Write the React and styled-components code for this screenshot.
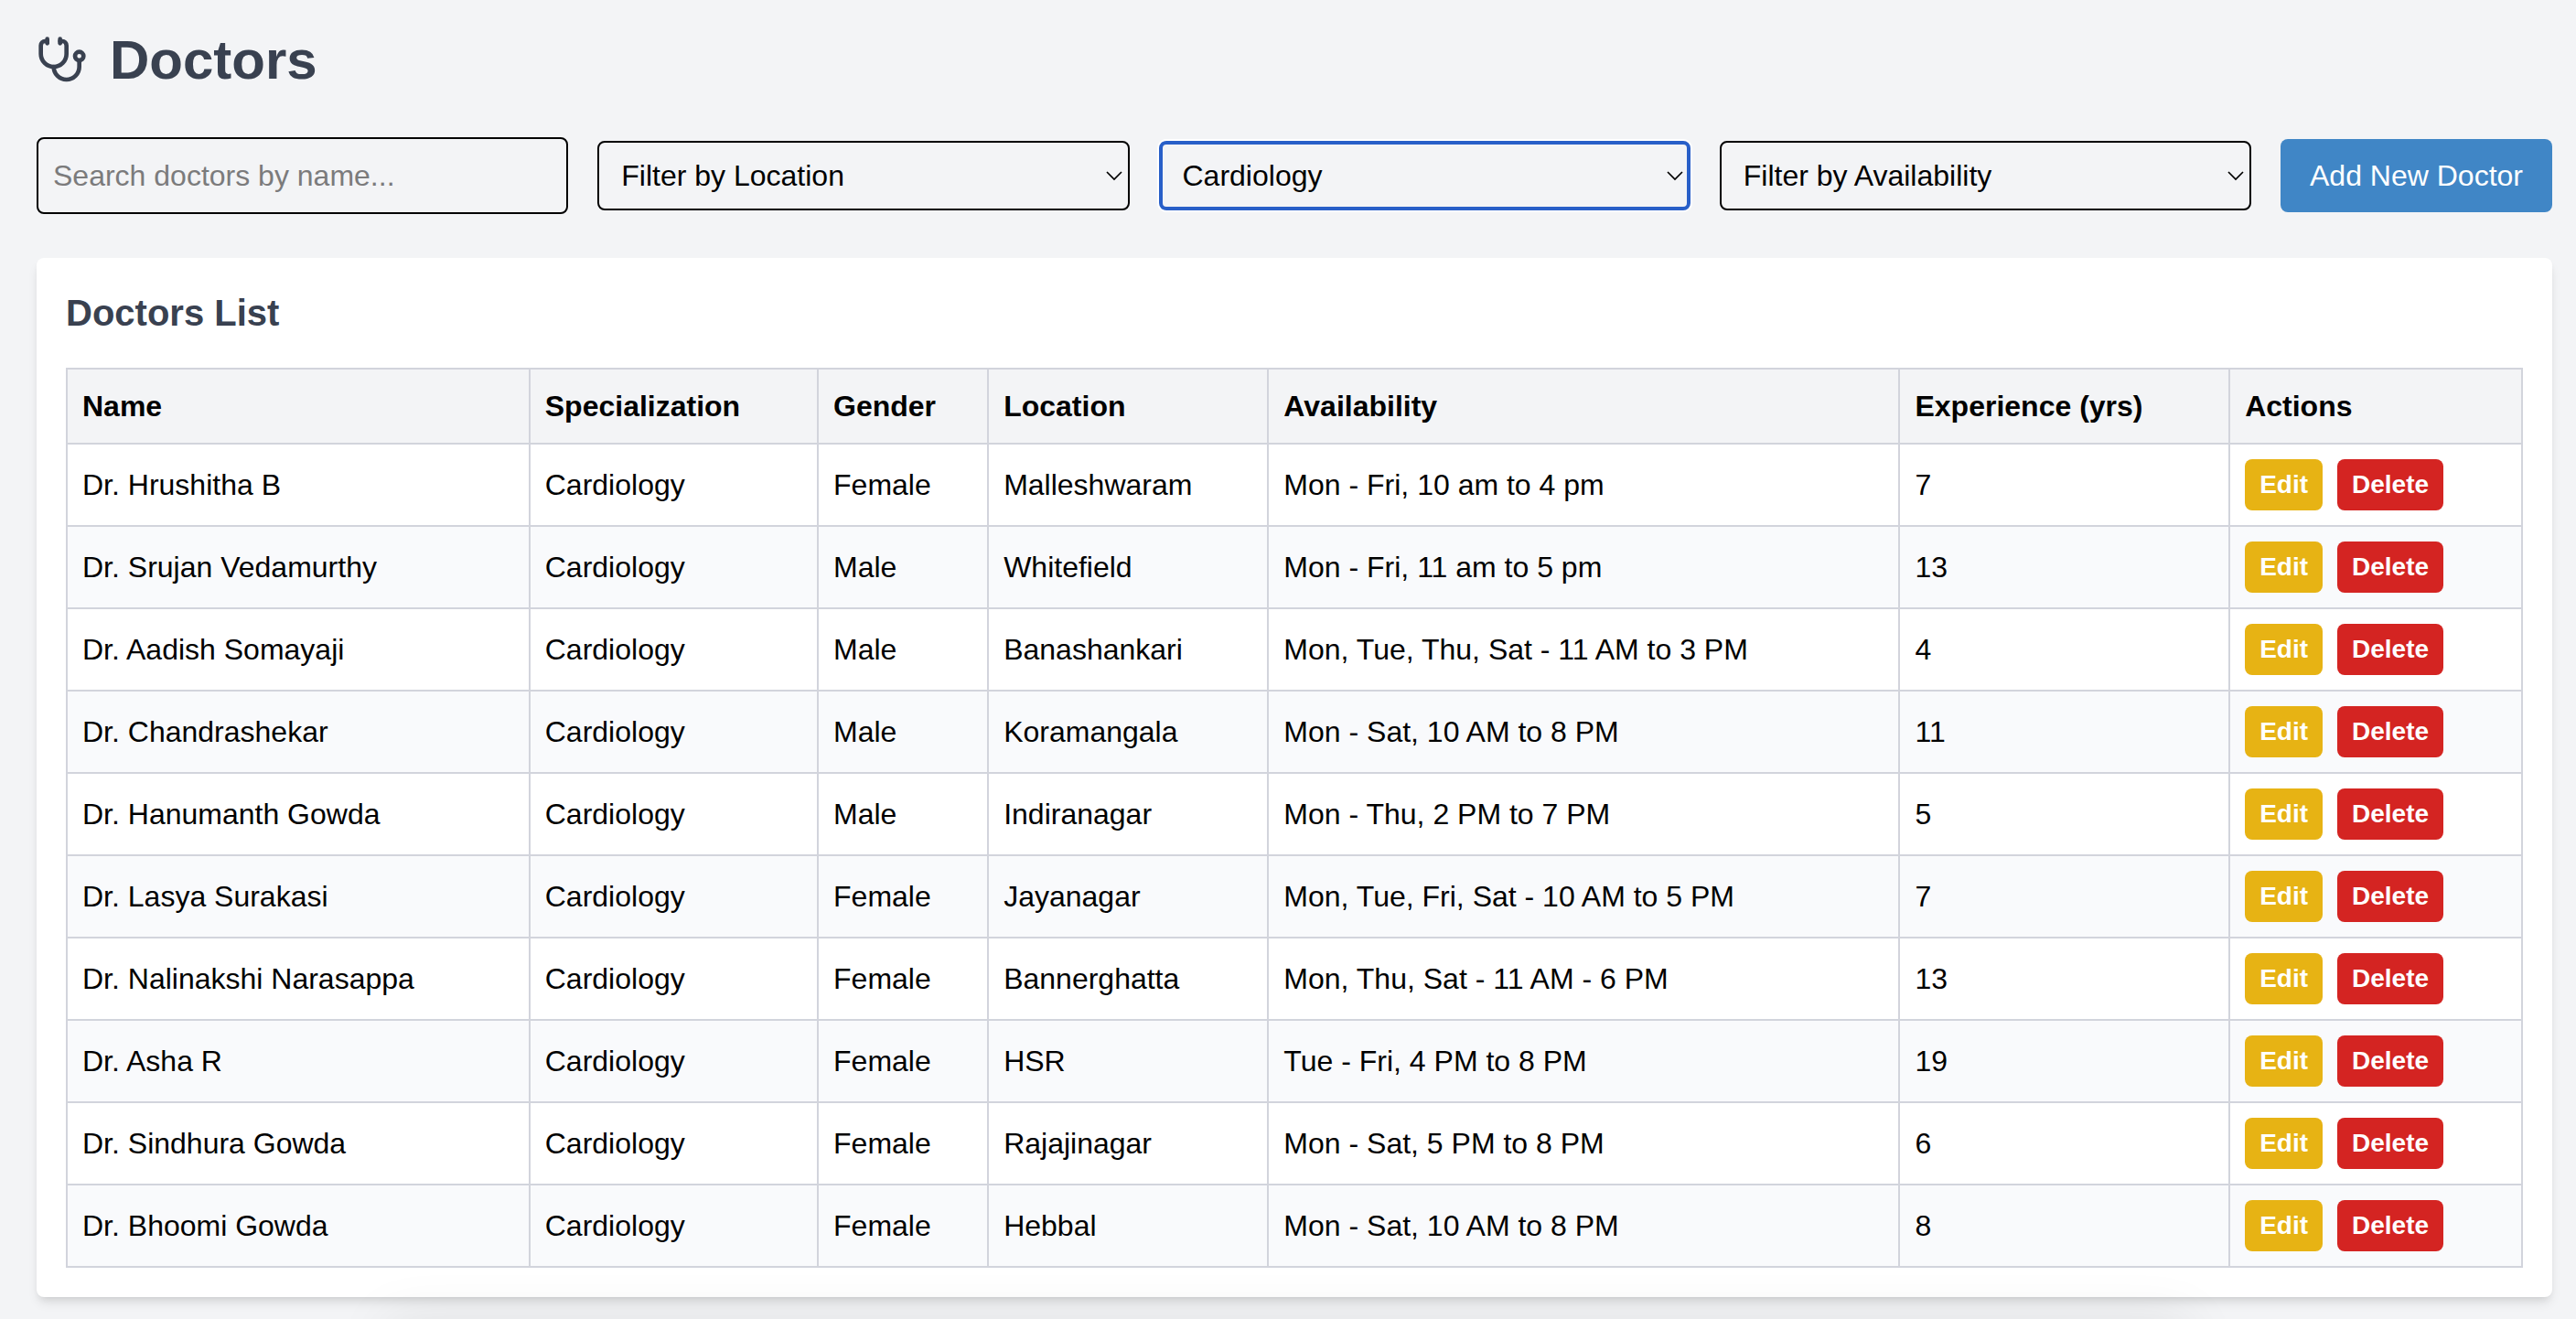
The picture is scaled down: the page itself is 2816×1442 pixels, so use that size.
import React, { useState } from "react";
import styled, { createGlobalStyle, css } from "styled-components";
import { Stethoscope } from "lucide-react";

const GlobalStyle = createGlobalStyle`
  *, *::before, *::after { box-sizing: border-box; }
  body {
    margin: 0;
    background: #f3f4f6;
    color: #000;
    font-family: "Liberation Sans", Arial, sans-serif;
    font-size: 32px;
    line-height: 48px;
  }
  button, input, select { font: inherit; color: inherit; margin: 0; }
`;

const Page = styled.main`
  padding: 30px 26px 24px 40px;
`;

const Title = styled.h1`
  display: flex;
  align-items: center;
  gap: 24px;
  margin: 0 0 48px;
  font-size: 60px;
  line-height: 72px;
  font-weight: 700;
  color: #394150;
`;

const Toolbar = styled.div`
  display: grid;
  grid-template-columns: repeat(4, minmax(0, 1fr)) auto;
  align-items: center;
  gap: 32px;
  margin-bottom: 48px;
`;

const SearchInput = styled.input`
  width: 100%;
  height: 84px;
  padding: 16px;
  border: 2px solid #000;
  border-radius: 8px;
  background: transparent;
  &::placeholder { color: #7b7b7c; opacity: 1; }
`;

const SelectWrap = styled.div`
  position: relative;
  display: flex;
`;

const Select = styled.select`
  appearance: none;
  width: 100%;
  height: 76px;
  padding: 0 48px 0 24px;
  border: 2px solid #000;
  border-radius: 8px;
  background: transparent;
  outline: none;
  ${(p) =>
    p.$active &&
    css`
      padding: 0 46px 0 22px;
      border: 4px solid #285fc8;
      box-shadow: 0 0 0 2px #fff;
    `}
`;

const Chevron = styled.svg`
  position: absolute;
  right: 8px;
  top: 50%;
  width: 18px;
  height: 12px;
  margin-top: -6px;
  pointer-events: none;
`;

const AddButton = styled.button`
  padding: 16px 32px;
  border: 0;
  border-radius: 8px;
  background: #4086c6;
  color: #fff;
  white-space: nowrap;
  cursor: pointer;
`;

const Card = styled.section`
  padding: 32px;
  border-radius: 8px;
  background: #fff;
  box-shadow: 0 8px 12px -2px rgba(0, 0, 0, 0.1), 0 4px 8px -4px rgba(0, 0, 0, 0.1);
`;

const CardTitle = styled.h2`
  margin: 0 0 32px;
  font-size: 40px;
  line-height: 56px;
  font-weight: 700;
  color: #394150;
`;

const Table = styled.table`
  width: 100%;
  border-collapse: collapse;
`;

const HeadCell = styled.th`
  padding: 16px;
  border: 2px solid #d2d4dc;
  background: #f3f4f6;
  font-weight: 700;
  text-align: left;
`;

const Row = styled.tr`
  &:nth-child(even) { background: #f9fafc; }
`;

const Cell = styled.td`
  padding: 16px;
  border: 2px solid #d2d4dc;
`;

const Actions = styled.div`
  display: flex;
  gap: 16px;
`;

const ActionButton = styled.button`
  padding: 8px 16px;
  border: 0;
  border-radius: 8px;
  background: ${(p) => (p.$danger ? "#d42422" : "#e7b314")};
  color: #fff;
  font-size: 28px;
  line-height: 40px;
  font-weight: 700;
  cursor: pointer;
`;

/* Soft shade rising from just below the window's lower edge */
const BottomShade = styled.div`
  position: fixed;
  top: 100%;
  left: 15%;
  right: 15%;
  height: 160px;
  box-shadow: 0 0 60px rgba(0, 0, 0, 0.08);
  pointer-events: none;
`;

const columns = ["Name", "Specialization", "Gender", "Location", "Availability", "Experience (yrs)", "Actions"];

const doctors = [
  ["Dr. Hrushitha B", "Cardiology", "Female", "Malleshwaram", "Mon - Fri, 10 am to 4 pm", 7],
  ["Dr. Srujan Vedamurthy", "Cardiology", "Male", "Whitefield", "Mon - Fri, 11 am to 5 pm", 13],
  ["Dr. Aadish Somayaji", "Cardiology", "Male", "Banashankari", "Mon, Tue, Thu, Sat - 11 AM to 3 PM", 4],
  ["Dr. Chandrashekar", "Cardiology", "Male", "Koramangala", "Mon - Sat, 10 AM to 8 PM", 11],
  ["Dr. Hanumanth Gowda", "Cardiology", "Male", "Indiranagar", "Mon - Thu, 2 PM to 7 PM", 5],
  ["Dr. Lasya Surakasi", "Cardiology", "Female", "Jayanagar", "Mon, Tue, Fri, Sat - 10 AM to 5 PM", 7],
  ["Dr. Nalinakshi Narasappa", "Cardiology", "Female", "Bannerghatta", "Mon, Thu, Sat - 11 AM - 6 PM", 13],
  ["Dr. Asha R", "Cardiology", "Female", "HSR", "Tue - Fri, 4 PM to 8 PM", 19],
  ["Dr. Sindhura Gowda", "Cardiology", "Female", "Rajajinagar", "Mon - Sat, 5 PM to 8 PM", 6],
  ["Dr. Bhoomi Gowda", "Cardiology", "Female", "Hebbal", "Mon - Sat, 10 AM to 8 PM", 8],
];

function Filter({ label, value, options, active, onChange }) {
  return (
    <SelectWrap>
      <Select aria-label={label} value={value} $active={active} onChange={(e) => onChange(e.target.value)}>
        <option value="">{label}</option>
        {options.map((o) => (
          <option key={o} value={o}>{o}</option>
        ))}
      </Select>
      <Chevron viewBox="0 0 18 12" fill="none" stroke="#000" strokeWidth="1.7" aria-hidden="true">
        <path d="M1 2l8 8 8-8" />
      </Chevron>
    </SelectWrap>
  );
}

export default function App() {
  const [search, setSearch] = useState("");
  const [location, setLocation] = useState("");
  const [specialization, setSpecialization] = useState("Cardiology");
  const [availability, setAvailability] = useState("");

  const visible = doctors.filter(
    ([name, spec, , loc, avail]) =>
      name.toLowerCase().includes(search.toLowerCase()) &&
      (!location || loc === location) &&
      (!specialization || spec === specialization) &&
      (!availability || avail.includes(availability))
  );

  return (
    <>
      <GlobalStyle />
      <Page>
        <Title>
          <Stethoscope size={56} aria-hidden="true" />
          Doctors
        </Title>
        <Toolbar>
          <SearchInput
            type="text"
            aria-label="Search doctors by name"
            placeholder="Search doctors by name..."
            value={search}
            onChange={(e) => setSearch(e.target.value)}
          />
          <Filter label="Filter by Location" value={location} options={doctors.map((d) => d[3])} onChange={setLocation} />
          <Filter
            label="Filter by Specialization"
            value={specialization}
            options={["Cardiology"]}
            active
            onChange={setSpecialization}
          />
          <Filter
            label="Filter by Availability"
            value={availability}
            options={["Mon", "Tue", "Thu", "Fri", "Sat"]}
            onChange={setAvailability}
          />
          <AddButton type="button">Add New Doctor</AddButton>
        </Toolbar>
        <Card>
          <CardTitle>Doctors List</CardTitle>
          <Table>
            <thead>
              <tr>
                {columns.map((c) => (
                  <HeadCell key={c} scope="col">{c}</HeadCell>
                ))}
              </tr>
            </thead>
            <tbody>
              {visible.map((d) => (
                <Row key={d[0]}>
                  {d.map((v, i) => (
                    <Cell key={i}>{v}</Cell>
                  ))}
                  <Cell>
                    <Actions>
                      <ActionButton type="button">Edit</ActionButton>
                      <ActionButton type="button" $danger>Delete</ActionButton>
                    </Actions>
                  </Cell>
                </Row>
              ))}
            </tbody>
          </Table>
        </Card>
      </Page>
      <BottomShade />
    </>
  );
}
